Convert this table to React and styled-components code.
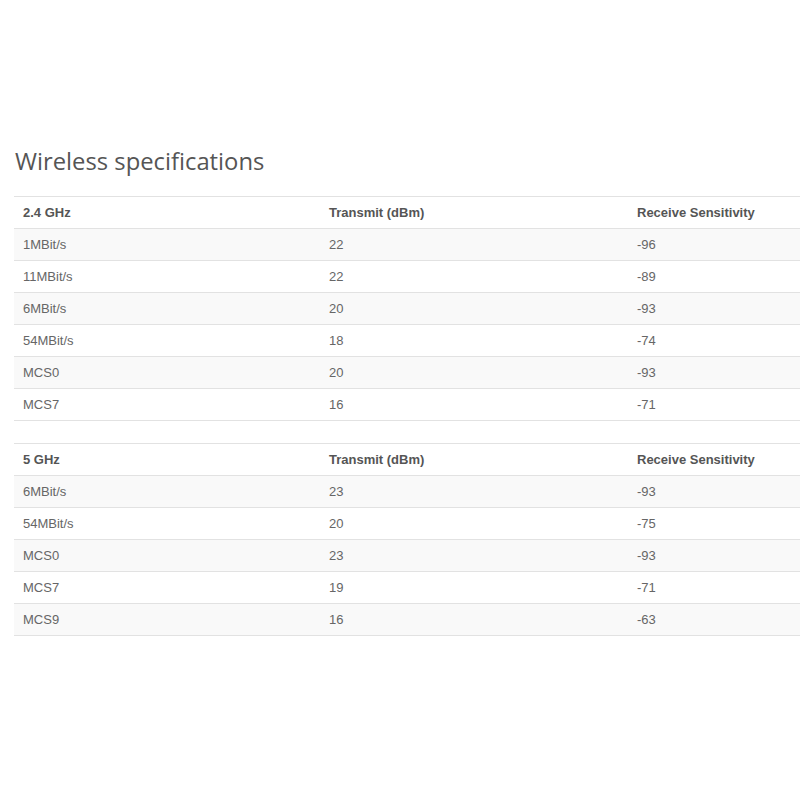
import React from 'react';
import styled, { createGlobalStyle } from 'styled-components';

const GlobalStyle = createGlobalStyle`
  html, body {
    margin: 0;
    padding: 0;
    background: #fff;
  }
  body {
    font-family: "Liberation Sans", Arial, sans-serif;
    color: #555;
  }
`;

const bands = [
  {
    name: '2.4 GHz',
    rows: [
      ['1MBit/s', '22', '-96'],
      ['11MBit/s', '22', '-89'],
      ['6MBit/s', '20', '-93'],
      ['54MBit/s', '18', '-74'],
      ['MCS0', '20', '-93'],
      ['MCS7', '16', '-71'],
    ],
  },
  {
    name: '5 GHz',
    rows: [
      ['6MBit/s', '23', '-93'],
      ['54MBit/s', '20', '-75'],
      ['MCS0', '23', '-93'],
      ['MCS7', '19', '-71'],
      ['MCS9', '16', '-63'],
    ],
  },
];

const SpecTable = ({ band }) => (
  <Table>
    <colgroup>
      <Col width="306px" />
      <Col width="308px" />
      <Col />
    </colgroup>
    <thead>
      <tr>
        <HeadCell>{band.name}</HeadCell>
        <HeadCell>Transmit (dBm)</HeadCell>
        <HeadCell>Receive Sensitivity</HeadCell>
      </tr>
    </thead>
    <tbody>
      {band.rows.map((row, i) => (
        <Row key={i} striped={i % 2 === 0}>
          {row.map((v, j) => (
            <Cell key={j}>{v}</Cell>
          ))}
        </Row>
      ))}
    </tbody>
  </Table>
);

export default function App() {
  return (
    <Page>
      <GlobalStyle />
      <Title>Wireless specifications</Title>
      <Tables>
        {bands.map((b) => (
          <SpecTable key={b.name} band={b} />
        ))}
      </Tables>
    </Page>
  );
}

const Page = styled.div`
  width: 786px;
  padding: 145px 0 0 14px;
`;

const Title = styled.h2`
  margin: 0 0 18px 1px;
  font-family: "Open Sans", "Liberation Sans", sans-serif;
  font-weight: 400;
  font-size: 23.8px;
  line-height: 33px;
  color: #555;
`;

const Tables = styled.div`
  display: flex;
  flex-direction: column;
  gap: 22px;
`;

const Table = styled.table`
  width: 100%;
  table-layout: fixed;
  border-collapse: collapse;
  border-bottom: 1px solid #e2e2e2;
  font-size: 13px;
`;

const Col = styled.col``;

const HeadCell = styled.th`
  height: 31px;
  padding: 0 9px;
  text-align: left;
  font-weight: 700;
  color: #555;
  border-top: 1px solid #e2e2e2;
  vertical-align: middle;
`;

const Row = styled.tr`
  background: ${(p) => (p.striped ? '#f9f9f9' : '#fff')};
`;

const Cell = styled.td`
  height: 31px;
  padding: 0 9px;
  color: #666;
  border-top: 1px solid #e2e2e2;
  vertical-align: middle;
`;
